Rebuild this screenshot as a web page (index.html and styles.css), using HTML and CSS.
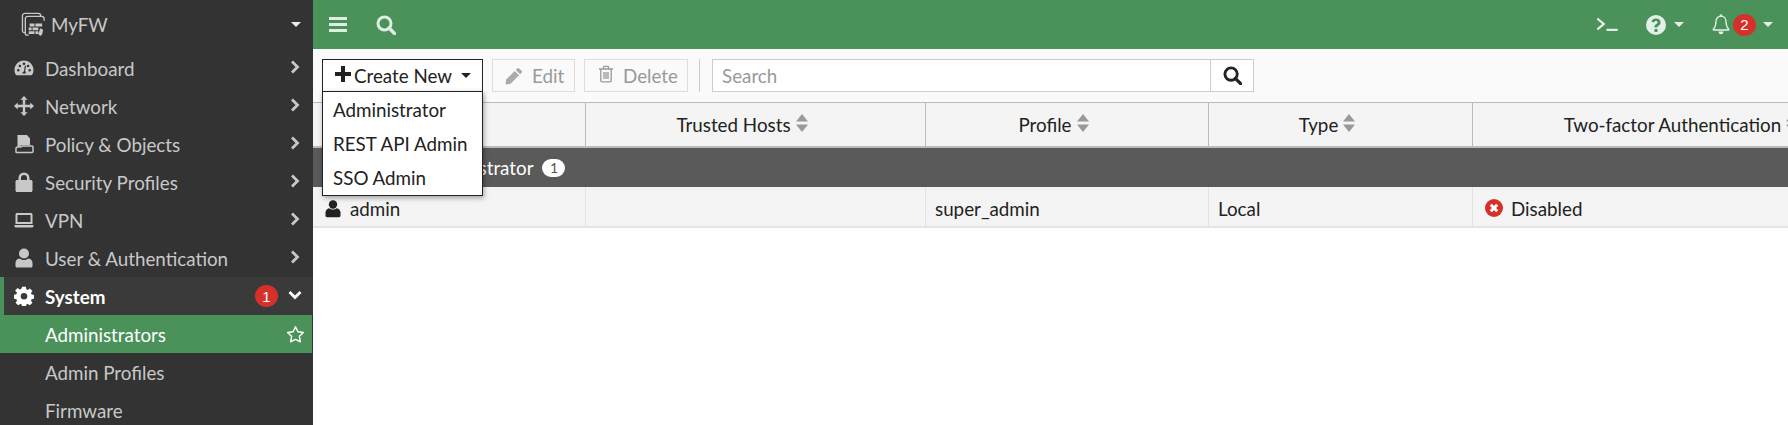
FILE: index.html
```html
<!DOCTYPE html>
<html lang="en">
<head>
<meta charset="utf-8">
<title>Administrators</title>
<link rel="stylesheet" href="styles.css">
</head>
<body>
<div class="app">
  <aside class="sidebar">
    <div class="brand">
      <svg class="brand-icon" viewBox="0 0 26 26" fill="none" stroke="#c8c8c8" stroke-width="1.4"><path d="M5 21.5H3.5a2 2 0 0 1-2-2V4a2.500 2.500 0 0 1 2.500-2.500h14A2.500 2.500 0 0 1 20.500 4v1"/><path d="M8 24H6.500a2 2 0 0 1-2-2V7A2.500 2.500 0 0 1 7 4.500h14.500A2.500 2.500 0 0 1 24 7v2"/><path fill="#c8c8c8" stroke="none" d="M9 12h5v3H9zM15 12h7v3h-7zM8 16h3v3H8zM12 16h6v3h-6zM8 20h6v3H8zM15 20h3v3h-3zM20 17l3 1.500-1 5-2 1.500-2-2z"/></svg>
      <span class="brand-name">MyFW</span>
      <span class="caret brand-caret"></span>
    </div>
    <nav class="nav">
      <a class="nav-item"><svg class="nav-icon" viewBox="0 0 20 20"><path fill="#c8c8c8" fill-rule="evenodd" d="M10 2.500C4.800 2.500.5 6.700.5 12c0 1.700.5 3.400 1.300 4.800.2.300.5.500.9.500h14.600c.4 0 .7-.2.900-.5.800-1.400 1.300-3.100 1.300-4.800 0-5.300-4.300-9.500-9.500-9.500zM4.300 13.500a1.300 1.300 0 1 1 0-2.600 1.300 1.300 0 0 1 0 2.600zm1.600-4.200a1.300 1.300 0 1 1 0-2.600 1.300 1.300 0 0 1 0 2.600zM10 7a1.300 1.300 0 1 1 0-2.600A1.300 1.300 0 0 1 10 7zm4.100 2.300a1.300 1.300 0 1 1 0-2.600 1.300 1.300 0 0 1 0 2.600zm1.600 4.200a1.300 1.300 0 1 1 0-2.600 1.300 1.300 0 0 1 0 2.600zM11.700 15.500H8.300c.1-1 .8-1.800 1.600-2l.9-5.500c.1-.4.500-.6.800-.5.300.1.500.4.400.8l-.9 4.900c.6.400 1 1.100.6 2.300z"/></svg><span class="nav-label">Dashboard</span><svg class="chev" viewBox="0 0 10 14"><path d="M2 1.500 7.500 7 2 12.500" fill="none" stroke="#c8c8c8" stroke-width="2.800"/></svg></a>
      <a class="nav-item"><svg class="nav-icon" viewBox="0 0 20 20"><path fill="#c8c8c8" d="M10 0l3.600 3.800h-2.400v5h5V6.400L20 10l-3.800 3.600v-2.400h-5v5h2.400L10 20l-3.600-3.800h2.400v-5h-5v2.400L0 10l3.800-3.600v2.400h5v-5H6.400z"/></svg><span class="nav-label">Network</span><svg class="chev" viewBox="0 0 10 14"><path d="M2 1.500 7.500 7 2 12.500" fill="none" stroke="#c8c8c8" stroke-width="2.800"/></svg></a>
      <a class="nav-item"><svg class="nav-icon" viewBox="0 0 20 20"><path fill="#c8c8c8" d="M3.500 1h9.500l3 3.500V11H8c-1 0-1.500.8-2.500 1.500H3.500z"/><path fill="none" stroke="#c8c8c8" stroke-width="1.500" d="M2 14.500c0-.8.600-1.500 1.500-1.500h3L8.500 12H18c.6 0 1 .5 1 1v4.500c0 .6-.4 1-1 1H2.500c-.3 0-.5-.2-.5-.5z"/></svg><span class="nav-label">Policy &amp; Objects</span><svg class="chev" viewBox="0 0 10 14"><path d="M2 1.500 7.500 7 2 12.500" fill="none" stroke="#c8c8c8" stroke-width="2.800"/></svg></a>
      <a class="nav-item"><svg class="nav-icon" viewBox="0 0 20 20"><path fill="#c8c8c8" fill-rule="evenodd" d="M4.500 8V6a5.500 5.500 0 0 1 11 0v2H17c.8 0 1.500.7 1.500 1.500v9c0 .8-.7 1.500-1.500 1.500H3c-.8 0-1.500-.7-1.500-1.500v-9C1.500 8.700 2.200 8 3 8zM7 8h6V6a3 3 0 0 0-6 0z"/></svg><span class="nav-label">Security Profiles</span><svg class="chev" viewBox="0 0 10 14"><path d="M2 1.500 7.500 7 2 12.500" fill="none" stroke="#c8c8c8" stroke-width="2.800"/></svg></a>
      <a class="nav-item"><svg class="nav-icon" viewBox="0 0 20 20"><path fill="#c8c8c8" fill-rule="evenodd" d="M3 3h14c.8 0 1.500.7 1.500 1.500V14h-17V4.500C1.500 3.700 2.200 3 3 3zm.500 2v7h13V5zM.5 15h19v1c0 .8-.7 1.500-1.500 1.500H2C1.200 17.500.5 16.800.5 16z"/></svg><span class="nav-label">VPN</span><svg class="chev" viewBox="0 0 10 14"><path d="M2 1.500 7.500 7 2 12.500" fill="none" stroke="#c8c8c8" stroke-width="2.800"/></svg></a>
      <a class="nav-item"><svg class="nav-icon" viewBox="0 0 20 20"><circle cx="10" cy="5.500" r="5" fill="#c8c8c8"/><path fill="#c8c8c8" d="M5.500 10.500c1.200.9 2.800 1.500 4.500 1.500s3.300-.6 4.500-1.500c2.500.3 4 2.200 4 4.500v3c0 .8-.7 1.500-1.500 1.500H3c-.8 0-1.500-.7-1.500-1.500v-3c0-2.300 1.500-4.200 4-4.500z"/></svg><span class="nav-label">User &amp; Authentication</span><svg class="chev" viewBox="0 0 10 14"><path d="M2 1.500 7.500 7 2 12.500" fill="none" stroke="#c8c8c8" stroke-width="2.800"/></svg></a>
      <a class="nav-item nav-open"><svg class="nav-icon" viewBox="0 0 20 20"><path fill="#fff" fill-rule="evenodd" d="M8.200.8h3.600l.5 2.500 1.500.6 2.100-1.400 2.500 2.500-1.400 2.100.6 1.500 2.500.5v3.600l-2.500.5-.6 1.500 1.400 2.100-2.500 2.500-2.100-1.400-1.500.6-.5 2.500H8.200l-.5-2.500-1.500-.6-2.100 1.400-2.500-2.500 1.400-2.100-.6-1.500-2.500-.5V8.700l2.500-.5.6-1.500L1.100 4.600l2.500-2.500 2.100 1.400 1.500-.6zM10 13.500a3.300 3.300 0 1 0 0-6.600 3.300 3.300 0 0 0 0 6.600z"/></svg><span class="nav-label">System</span><span class="badge nav-badge">1</span><svg class="chev-down" viewBox="0 0 14 10"><path d="M1.500 2 7 7.500 12.500 2" fill="none" stroke="#fff" stroke-width="2.800"/></svg></a>
      <a class="nav-item nav-sub nav-active"><span class="nav-label">Administrators</span><svg class="star" viewBox="0 0 20 20"><path d="M10 1.800l2.500 5.300 5.800.8-4.200 4 1 5.800L10 15.100 4.900 17.700l1-5.800-4.200-4 5.800-.8z" fill="none" stroke="#fff" stroke-width="1.500" stroke-linejoin="round"/></svg></a>
      <a class="nav-item nav-sub"><span class="nav-label">Admin Profiles</span></a>
      <a class="nav-item nav-sub"><span class="nav-label">Firmware</span></a>
    </nav>
  </aside>
  <main class="main">
    <header class="topbar">
      <svg class="top-menu" viewBox="0 0 18 15"><path fill="#dfeee3" d="M0 0h18v3H0zM0 6h18v3H0zM0 12h18v3H0z"/></svg>
      <svg class="top-search" viewBox="0 0 20 20"><circle cx="8.500" cy="8.500" r="6.500" fill="none" stroke="#dfeee3" stroke-width="3"/><path d="M13 13l5.500 5.500" stroke="#dfeee3" stroke-width="3.400" stroke-linecap="round"/></svg>
      <div class="top-right">
        <svg class="top-term" viewBox="0 0 20 14"><path d="M1 1.500 7 6.500 1 11.500" fill="none" stroke="#e9f3ec" stroke-width="2"/><path d="M9.500 12H20" stroke="#e9f3ec" stroke-width="2"/></svg>
        <span class="top-group help"><svg class="top-help" viewBox="0 0 20 20"><path fill="#e3f0e7" fill-rule="evenodd" d="M10 0a10 10 0 1 1 0 20 10 10 0 0 1 0-20zM8.500 14v3h3v-3zM10 3.500c-2.500 0-4 1.200-4.500 3.200l2.400.9c.3-1 1-1.600 2-1.600 1 0 1.700.5 1.700 1.300 0 .7-.5 1.100-1.300 1.600-1 .6-1.800 1.300-1.800 2.700V12.500h3V12c0-.5.300-.8 1-1.200 1.200-.7 2.100-1.600 2.100-3.300 0-2.400-2-4-4.600-4z"/></svg><span class="caret"></span></span>
        <span class="top-group bell"><svg class="top-bell" viewBox="0 0 18 21"><path d="M9 2.200c-3.100 0-5 2.400-5 5.300 0 4.300-1 6-2.700 7.800-.2.300 0 .7.300.7h14.800c.3 0 .5-.4.300-.7C14.999 13.500 14 11.800 14 7.500c0-2.900-1.900-5.300-5-5.300z" fill="none" stroke="#e9f3ec" stroke-width="1.300"/><path fill="#e9f3ec" d="M7.800 .5h2.400v2H7.800zM6.500 17.500h5c0 1.500-1.100 2.700-2.500 2.700s-2.500-1.200-2.500-2.700z"/></svg><span class="badge top-badge">2</span><span class="caret"></span></span>
      </div>
    </header>
    <div class="toolbar">
      <button class="btn btn-create"><svg class="btn-plus" viewBox="0 0 16 16"><path fill="#222" d="M6 0h4v6h6v4h-6v6H6v-6H0V6h6z"/></svg>Create New<span class="caret caret-dark"></span></button>
      <button class="btn btn-disabled btn-edit"><svg class="btn-icon" viewBox="0 0 18 18"><path fill="#aaa" d="M12.500 1.200c.4-.4 1-.4 1.400 0l2.900 2.900c.4.400.4 1 0 1.400l-1.700 1.700-4.300-4.300zM9.700 4 14 8.300 5.500 16.800.5 17.500l.7-5z"/></svg>Edit</button>
      <button class="btn btn-disabled btn-delete"><svg class="btn-icon trash" viewBox="0 0 16 18"><path d="M1 4h14M5.500 4V2.200c0-.5.300-.8.800-.8h3.400c.5 0 .8.300.8.800V4M2.800 4v11.500c0 .8.500 1.300 1.200 1.300h8c.7 0 1.200-.5 1.200-1.300V4M6 7v7M8 7v7M10 7v7" fill="none" stroke="#999" stroke-width="1.300"/></svg>Delete</button>
      <span class="sep"></span>
      <div class="search">
        <span class="search-input">Search</span>
        <span class="search-btn"><svg class="search-icon" viewBox="0 0 20 20"><circle cx="8.500" cy="8.500" r="6.500" fill="none" stroke="#222" stroke-width="3"/><path d="M13 13l5.500 5.500" stroke="#222" stroke-width="3.400" stroke-linecap="round"/></svg></span>
      </div>
      <div class="dropdown">
        <div class="dd-item">Administrator</div>
        <div class="dd-item">REST API Admin</div>
        <div class="dd-item">SSO Admin</div>
      </div>
    </div>
    <div class="table">
      <div class="thead">
        <div class="th"><span>Name</span><svg class="sort" viewBox="0 0 12 18"><path fill="#999" d="M6 0l6 7.500H0zM0 10.500h12L6 18z"/></svg></div>
        <div class="th"><span>Trusted Hosts</span><svg class="sort" viewBox="0 0 12 18"><path fill="#999" d="M6 0l6 7.500H0zM0 10.500h12L6 18z"/></svg></div>
        <div class="th"><span>Profile</span><svg class="sort" viewBox="0 0 12 18"><path fill="#999" d="M6 0l6 7.500H0zM0 10.500h12L6 18z"/></svg></div>
        <div class="th"><span>Type</span><svg class="sort" viewBox="0 0 12 18"><path fill="#999" d="M6 0l6 7.500H0zM0 10.500h12L6 18z"/></svg></div>
        <div class="th"><span>Two-factor Authentication</span><svg class="sort" viewBox="0 0 12 18"><path fill="#999" d="M6 0l6 7.500H0zM0 10.500h12L6 18z"/></svg></div>
      </div>
      <div class="group"><span class="group-label">System Administrator</span><span class="group-count">1</span></div>
      <div class="tr">
        <div class="td"><svg class="user-icon" viewBox="0 0 16 18"><circle cx="8" cy="4.500" r="4.200" fill="#222"/><path fill="#222" d="M4.300 8.200C5.300 9 6.600 9.500 8 9.500s2.700-.5 3.700-1.300c2.200.3 3.800 2 3.800 4.300v3.300c0 .8-.6 1.400-1.400 1.400H1.900c-.8 0-1.400-.6-1.400-1.400v-3.300c0-2.300 1.600-4 3.800-4.300z"/></svg>admin</div>
        <div class="td"></div>
        <div class="td">super_admin</div>
        <div class="td">Local</div>
        <div class="td"><svg class="x-icon" viewBox="0 0 18 18"><circle cx="9" cy="9" r="9" fill="#d6302a"/><path d="M5.800 5.800l6.400 6.400M12.200 5.800l-6.400 6.400" stroke="#fff" stroke-width="3"/></svg>Disabled</div>
      </div>
    </div>
  </main>
</div>
</body>
</html>
```
FILE: styles.css
```css
* { box-sizing: border-box; }
html, body { margin: 0; padding: 0; height: 100%; overflow: hidden; }
body { font-family: Lato, "Liberation Sans", sans-serif; font-size: 18.8px; color: #222; background: #fff; }
.app { display: flex; height: 425px; }

.sidebar { width: 313px; flex: none; background: #333; color: #c8c8c8; overflow: hidden; }
.brand { height: 49px; display: flex; align-items: center; padding-left: 21px; padding-right: 12px; }
.brand-icon { width: 25px; height: 25px; margin-right: 5px; }
.brand-name { flex: 1; }
.brand-caret { border-top-color: #c8c8c8; }
.nav { display: flex; flex-direction: column; }
.nav-item { height: 38px; display: flex; align-items: center; padding-left: 14px; padding-right: 13px; }
.nav-icon { width: 20px; height: 20px; margin-right: 11px; flex: none; }
.nav-label { flex: 1; padding-top: 1px; }
.chev { width: 10px; height: 14px; margin-top: -2px; }
.chev-down { width: 14px; height: 10px; margin-left: 10px; margin-top: -2px; }
.nav-open { background: #3a3a3a; color: #fff; font-weight: 700; box-shadow: inset 4px 0 0 #4a9259; padding-right: 11px; }
.nav-sub { padding-left: 45px; }
.nav-active { background: #4a9259; color: #fff; padding-right: 7px; margin-right: 1px; }
.star { width: 19px; height: 19px; }
.badge { display: inline-flex; align-items: center; justify-content: center; background: #d6302a; color: #fff; border-radius: 50%; font-weight: 400; width: 23px; height: 22px; font-size: 15px; font-family: "Liberation Sans", sans-serif; }

.main { flex: 1; min-width: 0; display: flex; flex-direction: column; overflow: hidden; }
.topbar { height: 49px; flex: none; background: #4a9259; display: flex; align-items: center; padding-left: 16px; }
.top-menu { width: 18px; height: 15px; }
.top-search { width: 20px; height: 20px; margin-left: 29px; }
.top-right { margin-left: auto; display: flex; align-items: center; padding-right: 15px; }
.top-term { width: 22px; height: 15px; margin-right: 28px; }
.top-group { display: flex; align-items: center; }
.help { margin-right: 28px; }
.top-help { width: 20px; height: 20px; margin-right: 8px; }
.top-bell { width: 18px; height: 21px; }
.top-badge { margin-left: 3px; margin-right: 7px; }
.caret { display: inline-block; width: 0; height: 0; border-left: 5px solid transparent; border-right: 5px solid transparent; border-top: 5px solid #e3f0e7; }
.caret-dark { border-top-color: #222; margin-left: 9px; }

.toolbar { position: relative; height: 53px; flex: none; background: #fafafa; display: flex; align-items: flex-start; padding: 10px 0 0 9px; }
.btn { height: 33px; font: inherit; background: #fff; display: flex; align-items: center; padding: 0; margin-right: 9px; border: 1px solid #ddd; color: #999; }
.btn-create { width: 161px; border-color: #222; color: #222; padding-left: 12px; background: #fff; }
.btn-plus { width: 16px; height: 16px; margin-right: 3px; margin-top: -3px; }
.btn-disabled { background: #fafafa; }
.btn-edit { width: 83px; padding-left: 12px; }
.btn-delete { width: 104px; padding-left: 13px; margin-right: 0; }
.btn-icon { width: 18px; height: 18px; margin-right: 9px; flex: none; }
.trash { width: 16px; margin-top: -3px; }
.sep { width: 1px; height: 33px; background: #ccc; margin: 0 12px 0 11px; }
.search { width: 542px; height: 33px; display: flex; border: 1px solid #ccc; background: #fff; }
.search-input { flex: 1; padding-left: 9px; color: #999; line-height: 31px; }
.search-btn { width: 43px; border-left: 1px solid #ccc; display: flex; align-items: center; justify-content: center; }
.search-icon { width: 19px; height: 19px; }
.dropdown { position: absolute; left: 9px; top: 42px; width: 161px; height: 105px; background: #fff; border: 1px solid #222; padding: 2px 0 0 10px; box-shadow: 1px 2px 5px rgba(0,0,0,.35); z-index: 5; }
.dd-item { height: 34px; line-height: 32px; white-space: nowrap; }

.table { display: flex; flex-direction: column; width: 1604px; flex: none; }
.thead, .tr { display: grid; grid-template-columns: 273px 340px 283px 264px 444px; }
.thead { height: 46px; background: #f4f4f4; border-top: 1px solid #bbb; border-bottom: 2px solid #bbb; }
.th { display: flex; align-items: center; justify-content: center; gap: 5px; border-right: 1px solid #bbb; padding-right: 27px; padding-bottom: 1px; white-space: nowrap; }
.sort { width: 12px; height: 18px; margin-top: -3px; }
.group { height: 39px; background: #5a5a5a; color: #fff; display: flex; align-items: center; padding-left: 44px; }
.group-label { white-space: nowrap; }
.group-count { background: #fff; color: #555; border-radius: 9px; width: 23px; height: 18px; margin-left: 9px; font-size: 14px; display: flex; align-items: center; justify-content: center; }
.tr { height: 41px; background: #f4f4f4; border-bottom: 2px solid #e4e4e4; }
.td { display: flex; align-items: center; padding-left: 9px; padding-top: 3px; border-right: 1px solid #e2e2e2; }
.user-icon { width: 16px; height: 18px; margin-right: 9px; margin-left: 3px; margin-top: 2px; }
.x-icon { width: 18px; height: 18px; margin-right: 8px; margin-left: 3px; }
```
